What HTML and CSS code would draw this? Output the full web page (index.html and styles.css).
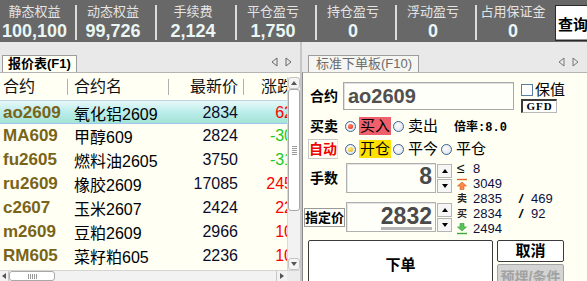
FILE: index.html
```html
<!DOCTYPE html>
<html lang="zh-CN">
<head>
    <meta charset="UTF-8">
    <meta name="viewport" content="width=device-width, initial-scale=1.0">
    <title>交易终端 - 报价与下单</title>
    <link rel="stylesheet" href="styles.css">
</head>
<body>
    <!-- Account summary -->
    <header class="summary-bar">
        <div class="stat first"><span class="stat-label">静态权益</span><span class="stat-value">100,100</span></div>
        <div class="stat"><span class="stat-label">动态权益</span><span class="stat-value">99,726</span></div>
        <div class="stat"><span class="stat-label">手续费</span><span class="stat-value">2,124</span></div>
        <div class="stat"><span class="stat-label">平仓盈亏</span><span class="stat-value">1,750</span></div>
        <div class="stat"><span class="stat-label">持仓盈亏</span><span class="stat-value">0</span></div>
        <div class="stat"><span class="stat-label">浮动盈亏</span><span class="stat-value">0</span></div>
        <div class="stat last"><span class="stat-label">占用保证金</span><span class="stat-value">0</span></div>
        <button class="query-btn">查询</button>
    </header>

    <main class="workspace">
        <!-- Quote list -->
        <section class="quote-panel">
            <div class="tab-strip">
                <div class="tab active">报价表(F1)</div>
                <div class="tab-arrows">
                    <svg width="7" height="10" viewBox="0 0 7 10"><polygon points="6,1 1,5 6,9" fill="none" stroke="#666"/></svg>
                    <svg width="7" height="10" viewBox="0 0 7 10"><polygon points="1,1 6,5 1,9" fill="none" stroke="#666"/></svg>
                </div>
            </div>

            <div class="quote-body">
                <div class="quote-table">
                    <div class="quote-row head">
                        <div class="cell">合约</div>
                        <div class="cell">合约名</div>
                        <div class="cell price">最新价</div>
                        <div class="cell change">涨跌</div>
                    </div>
                    <div class="quote-row selected">
                        <div class="cell code">ao2609</div>
                        <div class="cell name">氧化铝2609</div>
                        <div class="cell price">2834</div>
                        <div class="cell change up">62</div>
                    </div>
                    <div class="quote-row">
                        <div class="cell code">MA609</div>
                        <div class="cell name">甲醇609</div>
                        <div class="cell price">2824</div>
                        <div class="cell change down">-30</div>
                    </div>
                    <div class="quote-row">
                        <div class="cell code">fu2605</div>
                        <div class="cell name">燃料油2605</div>
                        <div class="cell price">3750</div>
                        <div class="cell change down">-31</div>
                    </div>
                    <div class="quote-row">
                        <div class="cell code">ru2609</div>
                        <div class="cell name">橡胶2609</div>
                        <div class="cell price">17085</div>
                        <div class="cell change up">245</div>
                    </div>
                    <div class="quote-row">
                        <div class="cell code">c2607</div>
                        <div class="cell name">玉米2607</div>
                        <div class="cell price">2424</div>
                        <div class="cell change up">22</div>
                    </div>
                    <div class="quote-row">
                        <div class="cell code">m2609</div>
                        <div class="cell name">豆粕2609</div>
                        <div class="cell price">2966</div>
                        <div class="cell change up">10</div>
                    </div>
                    <div class="quote-row">
                        <div class="cell code">RM605</div>
                        <div class="cell name">菜籽粕605</div>
                        <div class="cell price">2236</div>
                        <div class="cell change up">10</div>
                    </div>
                </div>

                <div class="vscroll">
                    <div class="sb-btn"><span class="tri-up"></span></div>
                    <div class="sb-thumb"><span class="grip"></span></div>
                    <div class="sb-fill"></div>
                    <div class="sb-btn"><span class="tri-down"></span></div>
                </div>
            </div>

            <div class="hscroll">
                <div class="hs-btn"><span class="tri-left"></span></div>
                <div class="hs-thumb"><span class="grip-v"></span></div>
                <div class="hs-fill"></div>
                <div class="hs-btn right"><span class="tri-right"></span></div>
                <div class="hs-corner"></div>
            </div>
        </section>

        <!-- Order entry -->
        <section class="order-panel">
            <div class="tab-strip">
                <div class="tab idle">标准下单板(F10)</div>
                <div class="tab-arrows">
                    <svg width="7" height="10" viewBox="0 0 7 10"><polygon points="6,1 1,5 6,9" fill="none" stroke="#777"/></svg>
                    <svg width="7" height="10" viewBox="0 0 7 10"><polygon points="1,1 6,5 1,9" fill="none" stroke="#777"/></svg>
                </div>
            </div>

            <div class="order-body">
                <div class="form-row contract-row">
                    <div class="field-label">合约</div>
                    <div class="text-input contract">ao2609</div>
                    <div class="contract-side">
                        <label class="check"><span class="checkbox"></span>保值</label>
                        <div class="gfd">GFD</div>
                    </div>
                </div>

                <div class="form-row side-row">
                    <div class="field-label">买卖</div>
                    <div class="opt"><span class="radio on-red"></span><span class="opt-text buy">买入</span></div>
                    <div class="opt"><span class="radio"></span><span class="opt-text">卖出</span></div>
                    <div class="rate">倍率:8.0</div>
                </div>

                <div class="form-row offset-row">
                    <div class="field-label"><span class="auto-box">自动</span></div>
                    <div class="opt"><span class="radio on-gold"></span><span class="opt-text open">开仓</span></div>
                    <div class="opt"><span class="radio"></span><span class="opt-text">平今</span></div>
                    <div class="opt"><span class="radio"></span><span class="opt-text">平仓</span></div>
                </div>

                <div class="qty-block">
                    <div class="qty-fields">
                        <div class="form-row num-row">
                            <div class="field-label">手数</div>
                            <div class="num-input"><span class="num-val">8</span></div>
                            <div class="spinner">
                                <div class="spin-btn"><span class="tri-up"></span></div>
                                <div class="spin-btn"><span class="tri-down"></span></div>
                            </div>
                        </div>
                        <div class="form-row num-row price-row">
                            <div class="field-label"><span class="price-box">指定价</span></div>
                            <div class="num-input"><span class="num-val selected-val">2832</span></div>
                            <div class="spinner">
                                <div class="spin-btn"><span class="tri-up"></span></div>
                                <div class="spin-btn"><span class="tri-down"></span></div>
                            </div>
                        </div>
                    </div>

                    <div class="depth">
                        <div class="depth-line"><span class="depth-icon le">≤</span><span>8</span></div>
                        <div class="depth-line">
                            <span class="depth-icon">
                                <svg width="10" height="12" viewBox="0 0 10 12"><line x1="0" y1="1.5" x2="10" y2="1.5" stroke="#e06a2a" stroke-width="1.4"/><polygon points="5,4 9.5,8 7,8 7,11.5 3,11.5 3,8 0.5,8" fill="#f58a4a" stroke="#d85a1a" stroke-width="0.6"/></svg>
                            </span><span>3049</span>
                        </div>
                        <div class="depth-line"><span class="depth-icon tag">卖</span><span class="depth-num">2835</span><span class="slash">/</span><span>469</span></div>
                        <div class="depth-line"><span class="depth-icon tag">买</span><span class="depth-num">2834</span><span class="slash">/</span><span>92</span></div>
                        <div class="depth-line">
                            <span class="depth-icon">
                                <svg width="10" height="12" viewBox="0 0 10 12"><polygon points="3,0.5 7,0.5 7,4 9.5,4 5,8 0.5,4 3,4" fill="#5cc25c" stroke="#2e9a2e" stroke-width="0.6"/><line x1="0" y1="10.5" x2="10" y2="10.5" stroke="#3aa83a" stroke-width="1.4"/></svg>
                            </span><span>2494</span>
                        </div>
                    </div>
                </div>

                <div class="action-row">
                    <button class="btn place">下单</button>
                    <div class="action-side">
                        <button class="btn cancel">取消</button>
                        <button class="btn disabled">预埋/条件</button>
                    </div>
                </div>
            </div>
        </section>
    </main>
</body>
</html>
```

FILE: styles.css
```css
/* Basic reset */
html, body {
    margin: 0;
    padding: 0;
    width: 587px;
    height: 281px;
    overflow: hidden;
    background-color: #e9e9e9;
    font-family: 'Liberation Sans', 'Noto Sans CJK SC', sans-serif;
    color: #000000;
}

button {
    font-family: inherit;
    padding: 0;
    cursor: pointer;
}

/* Account summary bar */
.summary-bar {
    display: flex;
    height: 42px;
    background-color: #686868;
    overflow: hidden;
}

.stat {
    flex-shrink: 0;
    width: 80px;
    height: 35px;
    margin-top: 5px;
    padding-right: 6px;
    box-sizing: border-box;
    border-right: 2px solid #dcdcdc;
    display: flex;
    flex-direction: column;
    align-items: center;
}
.stat.first { width: 77px; }
.stat.last { width: 78px; border-right: none; }

.stat-label {
    font-size: 13px;
    line-height: 14px;
    color: #e4e4e4;
}

.stat-value {
    margin-top: 3px;
    font-size: 18px;
    line-height: 18px;
    font-weight: bold;
    color: #eaf6f4;
}

.query-btn {
    flex-shrink: 0;
    width: 38px;
    height: 36px;
    margin-top: 5px;
    background-color: #ffffff;
    border: 1px solid #2a2a2a;
    box-shadow: inset -1px -1px 0 #9a9a9a;
    font-size: 15px;
    font-weight: bold;
    color: #000000;
    text-align: left;
    padding-left: 2px;
    white-space: nowrap;
}

/* Two panels */
.workspace {
    display: flex;
    height: 239px;
}

.tab-strip {
    display: flex;
    align-items: flex-end;
    height: 30px;
    background-color: #e9e9e9;
}

.tab {
    height: 16px;
    line-height: 16px;
    border: 1px solid #9c9c9c;
    border-bottom: none;
    padding: 0 5px;
    white-space: nowrap;
}
.tab.active {
    margin-left: 2px;
    background-color: #fffff4;
    font-size: 13px;
    font-weight: bold;
}
.tab.idle {
    margin-left: 6px;
    padding: 0 6px 0 7px;
    background-color: #f5f5f1;
    font-size: 13px;
    color: #6c6c6c;
}

.tab-arrows {
    margin-left: auto;
    margin-bottom: 5px;
    margin-right: 8px;
    display: flex;
    gap: 7px;
}

/* Quote list */
.quote-panel {
    width: 300px;
    display: flex;
    flex-direction: column;
}

.quote-body {
    display: flex;
    height: 198px;
    background-color: #fffff4;
    border-top: 1px solid #b4b4b4;
    box-sizing: border-box;
}

.quote-table {
    width: 287px;
    overflow: hidden;
}

.quote-row {
    display: grid;
    grid-template-columns: 68px 101px 75px 43px;
    height: 24px;
    align-items: center;
    box-sizing: border-box;
}

.quote-row.head {
    height: 27px;
}
.quote-row.head .cell {
    height: 16px;
    line-height: 16px;
    font-size: 16px;
    border-right: 1px solid #b0b0b0;
    padding-left: 3px;
    color: #111111;
}
.quote-row.head .cell:nth-child(2) { padding-left: 6px; }
.quote-row.head .cell.price { text-align: right; padding-right: 5px; }
.quote-row.head .cell.change { border-right: none; padding-left: 17px; }

.quote-row.selected {
    background: linear-gradient(to bottom, #e6f8f8, #b8ecea 55%, #a4e4d4);
    border-top: 1px solid #bcd6e4;
    border-bottom: 1px solid #9cc6f0;
}

.cell {
    white-space: nowrap;
}
.cell.code {
    padding-left: 3px;
    font-size: 17px;
    font-weight: bold;
    color: #7a6418;
}
.cell.name {
    padding-left: 6px;
    font-size: 16px;
    color: #000000;
}
.cell.price {
    text-align: right;
    padding-right: 6px;
    font-size: 16px;
    color: #0c0c2a;
}
.cell.change {
    text-align: right;
    margin-right: -6px;
    font-size: 16px;
}
.cell.change.up { color: #ff0000; }
.cell.change.down { color: #1ec81e; }

/* Scrollbars */
.vscroll {
    width: 13px;
    margin-top: 4px;
    display: flex;
    flex-direction: column;
    background-color: #f2f2f2;
    border-left: 1px solid #d8d8d8;
    box-sizing: border-box;
}

.sb-btn {
    height: 10px;
    display: flex;
    align-items: center;
    justify-content: center;
    background-color: #f4f4f4;
    border: 1px solid #c4c4c4;
    border-radius: 3px;
}

.sb-thumb {
    height: 120px;
    background-color: #ffffff;
    border: 1px solid #a8a8a8;
    border-radius: 3px;
    display: flex;
    align-items: center;
    justify-content: center;
}

.grip {
    width: 5px;
    height: 9px;
    background: repeating-linear-gradient(to bottom, #9a9a9a 0 1px, transparent 1px 2px);
}

.sb-fill { flex: 1; }

.hscroll {
    display: flex;
    height: 11px;
    background-color: #f2f2f2;
    border-top: 1px solid #d4d4d4;
    box-sizing: border-box;
}

.hs-btn {
    width: 8px;
    display: flex;
    align-items: center;
    justify-content: center;
    border-right: 1px solid #c8c8c8;
}
.hs-btn.right {
    width: 10px;
    border-right: none;
    border-left: 1px solid #c8c8c8;
}

.hs-thumb {
    width: 44px;
    background-color: #ffffff;
    border: 1px solid #a8a8a8;
    border-radius: 3px;
    display: flex;
    align-items: center;
    justify-content: center;
}

.grip-v {
    width: 9px;
    height: 5px;
    background: repeating-linear-gradient(to right, #9a9a9a 0 1px, transparent 1px 2px);
}

.hs-fill { flex: 1; }
.hs-corner { width: 13px; background-color: #ececec; }

/* Small triangles */
.tri-up, .tri-down, .tri-left, .tri-right {
    width: 0;
    height: 0;
    border: 3px solid transparent;
}
.tri-up { border-bottom: 4px solid #555; border-top: none; }
.tri-down { border-top: 4px solid #555; border-bottom: none; }
.tri-left { border-right: 4px solid #555; border-left: none; }
.tri-right { border-left: 4px solid #555; border-right: none; }

/* Order entry panel */
.order-panel {
    flex: 1;
    display: flex;
    flex-direction: column;
    border-left: 2px solid #c6c6c6;
}

.order-body {
    flex: 1;
    background-color: #fffff4;
    border-top: 1px solid #b4b4b4;
    border-left: 1px solid #8c8c8c;
    padding-top: 9px;
    overflow: hidden;
}

.form-row {
    display: flex;
    align-items: center;
}

.field-label {
    width: 40px;
    padding-left: 7px;
    box-sizing: border-box;
    font-size: 14px;
    font-weight: bold;
    line-height: 16px;
    flex-shrink: 0;
}

.contract-row {
    align-items: flex-start;
    height: 30px;
}
.contract-row .field-label { margin-top: 6px; }

.text-input.contract {
    width: 171px;
    height: 28px;
    box-sizing: border-box;
    border: 1px solid #a8a8a8;
    box-shadow: inset 1px 1px 0 #e0e0e0;
    background-color: #fffffa;
    padding-left: 4px;
    font-size: 20px;
    font-weight: bold;
    line-height: 26px;
    color: #505050;
}

.contract-side {
    margin-left: 7px;
    display: flex;
    flex-direction: column;
}

.check {
    display: flex;
    align-items: center;
    height: 14px;
    margin-top: 1px;
    font-size: 15px;
    line-height: 14px;
}

.checkbox {
    width: 12px;
    height: 12px;
    box-sizing: border-box;
    border: 1px solid #5a7ea2;
    background-color: #ffffff;
    margin-right: 2px;
}

.gfd {
    margin-top: 2px;
    width: 36px;
    height: 14px;
    box-sizing: border-box;
    border: 1px solid #b8b8b8;
    border-left: 2px solid #3a3a3a;
    border-top: 2px solid #3a3a3a;
    background-color: #ffffff;
    font-family: 'Liberation Serif', serif;
    font-size: 11px;
    font-weight: bold;
    line-height: 11px;
    letter-spacing: 1px;
    text-align: center;
}

.side-row {
    margin-top: 5px;
    height: 18px;
}

.offset-row {
    margin-top: 4px;
    height: 20px;
}

.opt {
    display: flex;
    align-items: center;
    margin-left: 2px;
}
.side-row .opt:first-of-type,
.offset-row .opt:first-of-type {
    margin-left: 5px;
}

.radio {
    position: relative;
    width: 11px;
    height: 11px;
    box-sizing: border-box;
    border: 1px solid #3f628c;
    border-radius: 50%;
    background: radial-gradient(circle at 40% 35%, #ffffff, #d6dce8);
    margin-right: 3px;
}
.radio.on-red::after,
.radio.on-gold::after {
    content: "";
    position: absolute;
    left: 2px;
    top: 2px;
    width: 5px;
    height: 5px;
    border-radius: 50%;
}
.radio.on-red::after { background: radial-gradient(circle at 40% 35%, #ff8a6a, #e01c0c); }
.radio.on-gold::after { background: radial-gradient(circle at 40% 35%, #fff080, #e0a800); }

.opt-text {
    font-size: 15px;
    line-height: 18px;
    padding: 0 1px;
}
.opt-text.buy { background-color: #f0606c; }
.opt-text.open { background-color: #ffe100; }

.rate {
    margin-left: 15px;
    font-family: 'Liberation Mono', 'Noto Sans CJK SC', monospace;
    font-size: 12px;
    font-weight: bold;
}

.auto-box {
    display: block;
    margin-left: -2px;
    width: 30px;
    height: 20px;
    box-sizing: border-box;
    border: 1px solid #c8c8c8;
    border-right-color: #e4e4e4;
    color: #f00000;
    font-size: 14px;
    line-height: 18px;
    text-align: center;
}

/* Quantity / price block */
.qty-block {
    display: flex;
    align-items: flex-start;
    margin-top: 4px;
}

.num-row {
    height: 30px;
}
.price-row {
    margin-top: 9px;
}

.num-row .field-label { width: 43px; }

.num-input {
    width: 90px;
    height: 30px;
    box-sizing: border-box;
    border: 1px solid #b0b0b0;
    box-shadow: inset 1px 1px 0 #e4e4e4;
    background-color: #fffffa;
    text-align: right;
    padding-right: 3px;
}

.num-val {
    display: inline-block;
    font-size: 23px;
    font-weight: bold;
    line-height: 25px;
    color: #4a4a4a;
}
.num-val.selected-val {
    line-height: 21px;
    margin-top: 3px;
    border-bottom: 3px solid #b6b6b6;
}

.price-box {
    display: block;
    margin-left: -6px;
    width: 41px;
    height: 19px;
    box-sizing: border-box;
    border: 1px solid #9a9a9a;
    font-size: 13px;
    line-height: 17px;
    text-align: center;
    background-color: #fffffa;
}

.spinner {
    margin-left: 1px;
    display: flex;
    flex-direction: column;
    gap: 1px;
}

.spin-btn {
    width: 15px;
    height: 14px;
    box-sizing: border-box;
    border: 1px solid #b4b4b4;
    background-color: #f6f6f6;
    display: flex;
    align-items: center;
    justify-content: center;
}
.spin-btn .tri-up { border-bottom-color: #000; }
.spin-btn .tri-down { border-top-color: #000; }

.depth {
    margin-left: 5px;
    margin-top: -2px;
}

.depth-line {
    display: flex;
    align-items: center;
    height: 15px;
    font-size: 13px;
    line-height: 15px;
    color: #0e0e3e;
}

.depth-icon {
    width: 16px;
    display: flex;
    align-items: center;
}
.depth-icon.le { font-size: 14px; color: #111; }
.depth-icon.tag {
    font-size: 10px;
    font-weight: bold;
    color: #222;
}

.depth-num { width: 46px; }
.slash {
    width: 12px;
    font-weight: bold;
    font-style: italic;
    color: #000;
}

/* Bottom buttons */
.action-row {
    display: flex;
    margin-top: 4px;
    margin-left: 5px;
}

.btn {
    background-color: #ffffff;
    border: 1px solid #3a3a3a;
    border-radius: 2px;
    font-size: 15px;
    font-weight: bold;
    color: #000000;
}

.btn.place {
    width: 185px;
    height: 46px;
}

.action-side {
    margin-left: 4px;
    display: flex;
    flex-direction: column;
    gap: 2px;
}

.btn.cancel {
    width: 67px;
    height: 22px;
    line-height: 18px;
}

.btn.disabled {
    width: 67px;
    height: 24px;
    font-size: 14px;
    background-color: #d4d4d4;
    border-color: #a4a4a4;
    color: #a2a2a2;
    white-space: nowrap;
}
```
